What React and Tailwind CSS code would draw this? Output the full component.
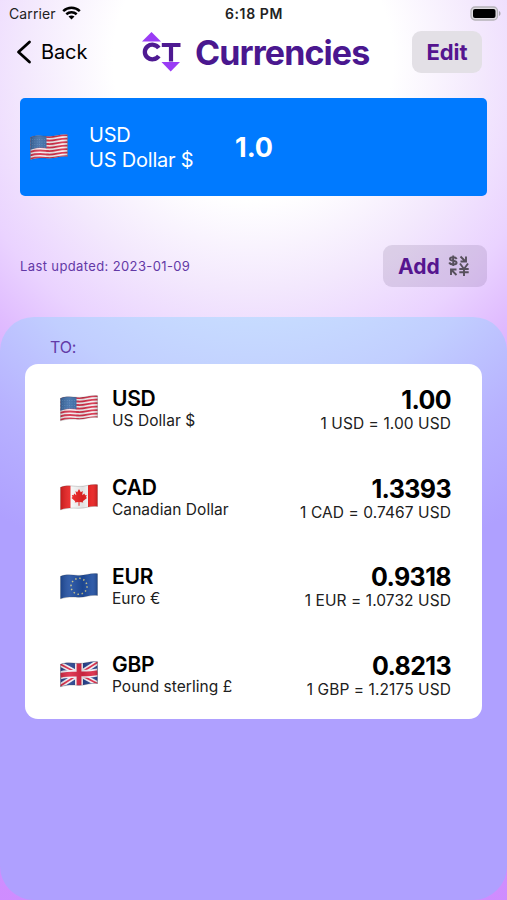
import { useId } from 'react';

const WAVE = 'M0.5 4.3C6 2 12 3 18 3.4C25 3.900 30 0.800 37.500 1.700V23.500C30 22.500 25 25.800 18 25.300C12 25 7 24.800 0.500 26.800Z';

function UsFlag() {
  const ys = [0, 1, 2, 3, 4, 5, 6];
  return (
    <>
      <rect width="38" height="28" fill="#f6eef0" />
      {ys.map((i) => (
        <path key={i} transform={`translate(0 ${i * 3.5})`} stroke="#d6304a" strokeWidth="1.8" fill="none" d="M0 5C7 2.500 12 3.500 18 4C25 4.500 30 1.500 38 2.200" />
      ))}
      <path d="M0 0H16.5V15.2C11 14.5 6 14.5 0 17Z" fill="#3b6ca8" />
      <path d="M2 6.5H16M2 9H16M2 11.5H16M2 14H16" stroke="#6c95c4" strokeWidth=".7" strokeDasharray=".8 1.6" />
    </>
  );
}

function CaFlag() {
  return (
    <>
      <rect width="38" height="28" fill="#fafafa" />
      <rect width="10.5" height="28" fill="#e81d1d" />
      <rect x="28" width="10" height="28" fill="#e81d1d" />
      <path fill="#ee2222" d="M19 6L20.8 9.200L22.800 8L22.200 12.300L24.500 10.500L25 12.200L26.800 12L26 14L27 15L22.800 18.200L23.200 19.600L19.500 19.100V22.800H18.500V19.100L14.800 19.600L15.200 18.200L11.500 15L12.500 14L11.800 12L13.600 12.200L14.200 10.500L16.300 12.300L15.500 8L17.200 9.200Z" />
    </>
  );
}

function EuFlag() {
  return (
    <>
      <rect width="38" height="28" fill="#1f4ea1" />
      <circle cx="19" cy="14.300" r="8" fill="none" stroke="#c9c58a" strokeWidth="1.500" strokeDasharray="1.500 2.689" />
    </>
  );
}

function GbFlag() {
  return (
    <>
      <rect width="38" height="28" fill="#26418e" />
      <path d="M0 4L38 24M0 26L38 2" stroke="#f4f1f6" strokeWidth="5" />
      <path d="M0 4L38 24M0 26L38 2" stroke="#dc2744" strokeWidth="1.7" />
      <path d="M19 0V28M0 15.5C10 12 26 15.5 38 12.5" stroke="#f4f1f6" strokeWidth="8" fill="none" />
      <path d="M19 0V28M0 15.5C10 12 26 15.5 38 12.5" stroke="#dc2744" strokeWidth="4.8" fill="none" />
    </>
  );
}

const FLAGS = { USD: UsFlag, CAD: CaFlag, EUR: EuFlag, GBP: GbFlag };

function Flag({ code }) {
  const id = useId();
  const Art = FLAGS[code];
  return (
    <svg width="38" height="28" viewBox="0 0 38 28" className="shrink-0">
      <defs>
        <clipPath id={id + 'c'}><path d={WAVE} /></clipPath>
        <linearGradient id={id + 'g'}>
          <stop offset="0" stopColor="#000" stopOpacity=".18" />
          <stop offset=".25" stopColor="#fff" stopOpacity=".1" />
          <stop offset=".6" stopColor="#000" stopOpacity=".1" />
          <stop offset=".85" stopColor="#fff" stopOpacity=".08" />
          <stop offset="1" stopColor="#000" stopOpacity=".2" />
        </linearGradient>
      </defs>
      <g clipPath={`url(#${id}c)`}>
        <Art />
        <rect width="38" height="28" fill={`url(#${id}g)`} />
      </g>
      <path d={WAVE} fill="none" stroke="#333" strokeOpacity=".3" strokeWidth=".7" />
    </svg>
  );
}

const ROWS = [
  { code: 'USD', name: 'US Dollar $', value: '1.00', rate: '1 USD = 1.00 USD' },
  { code: 'CAD', name: 'Canadian Dollar', value: '1.3393', rate: '1 CAD = 0.7467 USD' },
  { code: 'EUR', name: 'Euro €', value: '0.9318', rate: '1 EUR = 1.0732 USD' },
  { code: 'GBP', name: 'Pound sterling £', value: '0.8213', rate: '1 GBP = 1.2175 USD' },
];

function StatusBar() {
  return (
    <div className="grid h-7 grid-cols-3 items-center pl-[9px] pr-[6px] text-[14px] text-[#222]">
      <div className="flex items-center gap-[6px]">
        <span className="-mt-[2px] tracking-[0.1px]">Carrier</span>
        <svg className="-mt-[2px]" width="19" height="14" viewBox="0 0 19 14" fill="none" stroke="#000" strokeWidth="2.5">
          <path d="M1.2 5.2C6 .7 13 .7 17.8 5.2M4.3 8.3C7.3 5.6 11.7 5.6 14.7 8.3" />
          <path d="M9.5 13.6L6.5 10.6C8.2 9 10.8 9 12.5 10.6Z" fill="#000" stroke="none" />
        </svg>
      </div>
      <div className="-mt-[2px] pr-[2px] text-center font-semibold tracking-[0.6px]">6:18 PM</div>
      <svg className="-mt-px justify-self-end" width="31" height="16" viewBox="0 0 31 16">
        <rect x="1" y="1" width="26.500" height="13" rx="4" fill="#e0dde2" stroke="#b5b2b8" strokeWidth="1.300" />
        <rect x="3" y="3" width="22.500" height="9" rx="2" fill="#000" />
        <path d="M29 5C31 5.700 31 9.300 29 10Z" fill="#aaa7ad" />
      </svg>
    </div>
  );
}

function Logo() {
  return (
    <svg width="40" height="42" viewBox="0 0 40 42" className="shrink-0">
      <path d="M10.500 1L20 10.500H1Z" fill="#9a3cf5" />
      <path d="M20.500 31H39L29.700 40.500Z" fill="#9a3cf5" />
      <path d="M17.800 17A7.600 7.300 0 1 0 17.800 25" fill="none" stroke="#4e1a92" strokeWidth="4.300" />
      <path d="M20.800 14H39.500M30 13V30.500" fill="none" stroke="#4e1a92" strokeWidth="4.200" />
    </svg>
  );
}

function ExchangeIcon() {
  return (
    <svg width="22" height="22" viewBox="0 0 22 22" fill="none" stroke="#57505c" strokeWidth="1.900">
      <path d="M8.700 4C7.500 1.500 2 1.700 2 4C2 6.500 8.600 5 8.600 7.700C8.600 10 2.500 10.200 1.200 7.500M5.200 .5V11" />
      <path d="M12.500 1.500L17.500 6.500M18 1.500V6.500H12.500" />
      <path d="M8.500 20L3.500 15M3 20V14.500H8.500" />
      <path d="M12 8.500L16 14L20 8.500M16 13.500V21M11.300 14H20.700M11.300 17.300H20.700" />
    </svg>
  );
}

export default function App() {
  return (
    <div className="flex h-[900px] w-[507px] flex-col overflow-hidden bg-[radial-gradient(circle_at_253px_60px,#fff_0px,#fff_140px,#f3e8fd_230px,#ead3ff_305px,#e0bcff_360px,#d394ff_470px,#cf8cff_900px)] font-['Inter','Liberation_Sans',sans-serif] text-black">
      <StatusBar />
      <header className="flex h-12 items-center pl-4 pr-[25px]">
        <button className="flex w-[125px] items-center gap-[9px] text-[20px] tracking-[-0.1px]">
          <svg width="16" height="24" viewBox="0 0 16 24" fill="none" stroke="#000" strokeWidth="2.800" strokeLinecap="round" strokeLinejoin="round"><path d="M13.500 2L2.500 12L13.500 22" /></svg>
          <span>Back</span>
        </button>
        <Logo />
        <h1 className="ml-[14px] flex-1 whitespace-nowrap pt-[2px] text-[34px] font-bold leading-[48px] tracking-[-0.9px] text-[#4a178f]">Currencies</h1>
        <button className="h-[42px] w-[70px] rounded-[9px] bg-[#e3e0e6] pt-px text-[22px] font-bold tracking-[-0.1px] text-[#55158f]">Edit</button>
      </header>
      <section className="mx-5 mt-[22px] flex h-[98px] shrink-0 items-center rounded-[5px] bg-[#007aff] pl-[10px] text-white">
        <Flag code="USD" />
        <div className="ml-[21px] w-[146px] pt-[2px] text-[20px] leading-[25px] tracking-[-0.2px]">
          <div>USD</div>
          <div>US Dollar $</div>
        </div>
        <div className="pt-[2px] text-[27px] font-bold">1.0</div>
      </section>
      <div className="mx-5 mt-[49px] flex h-[42px] shrink-0 items-center justify-between">
        <span className="pt-[2px] text-[13px] tracking-[0.38px] text-[#6339a6]">Last updated: 2023-01-09</span>
        <button className="flex h-[42px] w-[104px] items-center gap-[8px] rounded-[9px] bg-[#59406b]/15 pl-[15px] text-[21px] font-bold text-[#55158f]">
          <span className="pt-px">Add</span>
          <ExchangeIcon />
        </button>
      </div>
      <main className="mt-[30px] h-[583px] shrink-0 rounded-[34px] bg-[radial-gradient(circle_at_253px_-220px,#c8ddff_0px,#c7dcff_215px,#c1ceff_300px,#b7b1ff_400px,#afa0ff_490px,#afa0ff_900px)] px-[25px]">
        <h2 className="flex h-[47px] items-center pl-[25px] pt-[13px] text-[16px] tracking-[-0.2px] text-[#633aa8]">TO:</h2>
        <div className="h-[355px] rounded-[13px] bg-white pl-[34.500px] pr-[31px]">
          {ROWS.map((r) => (
            <div key={r.code} className="flex h-[88.700px] items-center">
              <Flag code={r.code} />
              <div className="ml-[14.500px] flex-1 pt-[4px]">
                <div className="text-[21px] font-semibold leading-[22px] tracking-[-0.25px]">{r.code}</div>
                <div className="text-[15.500px] leading-[22px] tracking-[0.05px] text-[#202020]">{r.name}</div>
              </div>
              <div className="pt-[7px] text-right">
                <div className="text-[25px] font-bold leading-[24px] tracking-[-0.6px]">{r.value}</div>
                <div className="text-[15.500px] leading-[24px] tracking-[0.08px] text-[#202020]">{r.rate}</div>
              </div>
            </div>
          ))}
        </div>
      </main>
    </div>
  );
}
